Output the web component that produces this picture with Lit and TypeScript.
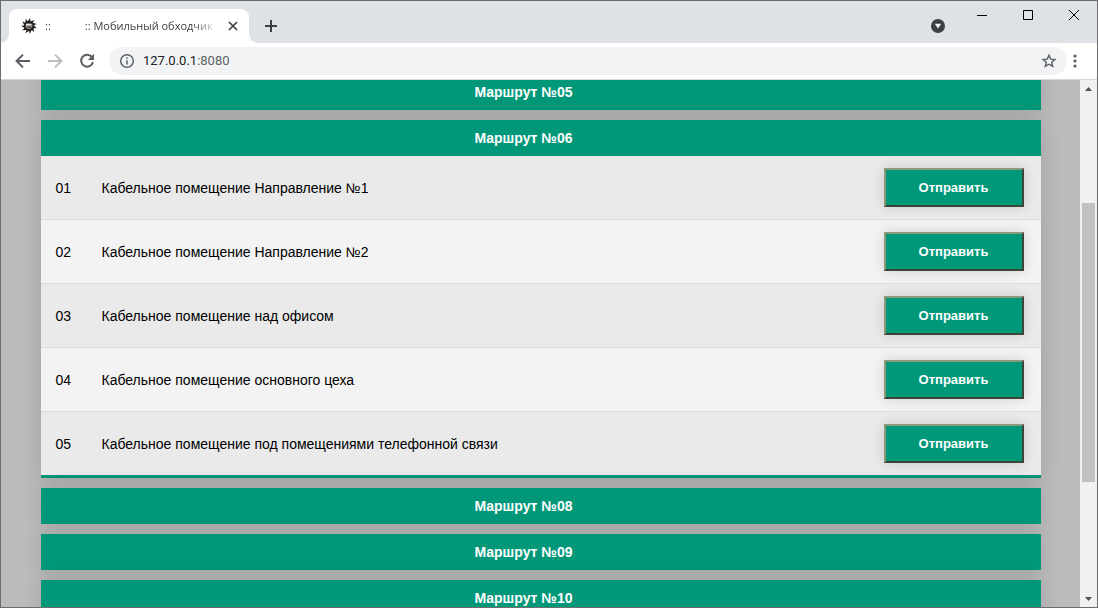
import { LitElement, html, svg, css } from "lit";
import { customElement, property } from "lit/decorators.js";

interface Point {
  code: string;
  name: string;
}

interface Route {
  title: string;
  points: Point[];
}

const ROUTES: Route[] = [
  { title: "Маршрут №05", points: [] },
  {
    title: "Маршрут №06",
    points: [
      { code: "01", name: "Кабельное помещение Направление №1" },
      { code: "02", name: "Кабельное помещение Направление №2" },
      { code: "03", name: "Кабельное помещение над офисом" },
      { code: "04", name: "Кабельное помещение основного цеха" },
      { code: "05", name: "Кабельное помещение под помещениями телефонной связи" },
    ],
  },
  { title: "Маршрут №08", points: [] },
  { title: "Маршрут №09", points: [] },
  { title: "Маршрут №10", points: [] },
];

const TEETH = Array.from({ length: 11 }, (_, i) => Math.round((i * 360) / 11));

@customElement("tab-strip")
export class TabStrip extends LitElement {
  static styles = css`
    :host {
      display: flex;
      height: 42px;
      background: #dee1e6;
      font-family: "Open Sans", sans-serif;
    }
    button {
      display: flex;
      align-items: center;
      justify-content: center;
      padding: 0;
      border: 0;
      background: none;
      color: #3c4043;
    }
    svg {
      display: block;
    }
    .flare {
      align-self: flex-end;
      width: 8px;
      height: 8px;
    }
    .flare.left {
      background: radial-gradient(circle at 0 0, transparent 7px, #fff 8px);
    }
    .flare.right {
      background: radial-gradient(circle at 100% 0, transparent 7px, #fff 8px);
    }
    .tab {
      display: flex;
      align-items: center;
      box-sizing: border-box;
      width: 240px;
      height: 34px;
      margin-top: 8px;
      padding: 0 8px 0 12px;
      border-radius: 8px 8px 0 0;
      background: #fff;
    }
    .title {
      display: flex;
      flex: 1;
      gap: 34px;
      margin: 0 6px 0 8px;
      white-space: nowrap;
      font-size: 11px;
      line-height: 16px;
      color: #3c4043;
      mask-image: linear-gradient(to right, #000 calc(100% - 28px), transparent);
    }
    .close {
      width: 16px;
      height: 16px;
    }
    .new {
      width: 28px;
      height: 28px;
      margin-top: 11px;
    }
    .spacer {
      flex: 1;
    }
    .search {
      width: 42px;
      height: 28px;
      margin-top: 11px;
    }
    .control {
      width: 46px;
      height: 28px;
      color: #000;
    }
  `;

  render() {
    return html`
      <span class="flare left"></span>
      <div class="tab">
        <svg width="16" height="16" viewBox="0 0 16 16" aria-hidden="true">
          ${TEETH.map((a) => svg`<path d="M6.4 3.6 9.4 0 9.2 3.6z" fill="#1c1b1a" transform="rotate(${a} 8 8)" />`)}
          <circle cx="8" cy="8" r="5.1" fill="#1c1b1a" />
          <path d="M4.6 6h6.8v2.8l-2 2.2H6.4L4.6 9z" fill="#8f8780" />
          <path d="M5 5.6h5.4v1.8H5z" fill="#e4e1de" />
          <path d="M6.4 8.6h3.6v1H6.4z" fill="#3a3532" />
        </svg>
        <span class="title"><span>::</span><span>:: Мобильный обходчик</span></span>
        <button class="close" aria-label="Закрыть вкладку">
          <svg width="16" height="16" viewBox="0 0 16 16" fill="none" stroke="currentColor" stroke-width="1.7">
            <path d="M4 4l8 8M12 4l-8 8" />
          </svg>
        </button>
      </div>
      <span class="flare right"></span>
      <button class="new" aria-label="Новая вкладка">
        <svg width="14" height="14" viewBox="0 0 14 14" fill="none" stroke="currentColor" stroke-width="2">
          <path d="M7 1v12M1 7h12" />
        </svg>
      </button>
      <span class="spacer"></span>
      <button class="search" aria-label="Поиск вкладок">
        <svg width="14" height="14" viewBox="0 0 14 14">
          <circle cx="7" cy="7" r="7" fill="#3c4043" />
          <path d="M3.8 4.8h6.4L7 9.4z" fill="#f1f3f4" />
        </svg>
      </button>
      <button class="control" aria-label="Свернуть">
        <svg width="10" height="10" viewBox="0 0 10 10"><path d="M0 5h10v1H0z" /></svg>
      </button>
      <button class="control" aria-label="Развернуть">
        <svg width="10" height="10" viewBox="0 0 10 10" fill="none" stroke="currentColor">
          <path d="M.5 .5h9v9h-9z" />
        </svg>
      </button>
      <button class="control" aria-label="Закрыть">
        <svg width="10" height="10" viewBox="0 0 10 10" fill="none" stroke="currentColor">
          <path d="M0 0l10 10M10 0L0 10" />
        </svg>
      </button>
    `;
  }
}

@customElement("address-bar")
export class AddressBar extends LitElement {
  static styles = css`
    :host {
      display: flex;
      align-items: center;
      box-sizing: border-box;
      height: 37px;
      padding: 0 14px 0 6px;
      border-bottom: 1px solid #d5d7da;
      background: #fff;
    }
    button {
      display: flex;
      align-items: center;
      justify-content: center;
      width: 32px;
      height: 28px;
      padding: 0;
      border: 0;
      background: none;
      color: #5a5d61;
    }
    button:disabled {
      color: #babcbe;
    }
    .field {
      display: flex;
      flex: 1;
      align-items: center;
      height: 28px;
      margin-left: 6px;
      padding: 0 2px 0 10px;
      border-radius: 14px;
      background: #f1f3f4;
      color: #5f6368;
      font: 13px/20px Roboto, sans-serif;
    }
    .url {
      flex: 1;
      padding-left: 8px;
    }
    .host {
      color: #202124;
    }
    .menu {
      width: 16px;
    }
  `;

  render() {
    return html`
      <button aria-label="Назад">
        <svg width="16" height="16" viewBox="0 0 16 16" fill="none" stroke="currentColor" stroke-width="2">
          <path d="M15 8H2.4M8 1.6L1.6 8 8 14.4" />
        </svg>
      </button>
      <button aria-label="Вперёд" disabled>
        <svg width="16" height="16" viewBox="0 0 16 16" fill="none" stroke="currentColor" stroke-width="2">
          <path d="M1 8h12.6M8 1.6L14.4 8 8 14.4" />
        </svg>
      </button>
      <button aria-label="Обновить">
        <svg width="16" height="16" viewBox="0 0 16 16" fill="none" stroke="currentColor" stroke-width="2">
          <path d="M13.2 4.4A6 6 0 1 0 14 9" />
          <path d="M15 .8V7H8.8z" fill="currentColor" stroke="none" />
        </svg>
      </button>
      <div class="field">
        <svg width="16" height="16" viewBox="0 0 16 16" fill="none" stroke="currentColor" stroke-width="1.5">
          <circle cx="8" cy="8" r="6.3" />
          <path d="M8 7.2v4.3M8 4.4v1.6" />
        </svg>
        <span class="url"><span class="host">127.0.0.1</span>:8080</span>
        <button aria-label="Добавить в закладки">
          <svg width="16" height="16" viewBox="0 0 16 16" fill="none" stroke="currentColor" stroke-width="1.4">
            <path d="M8 2.2l1.7 3.9 4.2.4-3.2 2.8 1 4.1L8 11.2l-3.7 2.2 1-4.1L2.1 6.5l4.2-.4z" />
          </svg>
        </button>
      </div>
      <button class="menu" aria-label="Меню">
        <svg width="4" height="14" viewBox="0 0 4 14" fill="currentColor">
          <circle cx="2" cy="2" r="1.6" />
          <circle cx="2" cy="7" r="1.6" />
          <circle cx="2" cy="12" r="1.6" />
        </svg>
      </button>
    `;
  }
}

@customElement("route-table")
export class RouteTable extends LitElement {
  @property({ attribute: false }) route!: Route;

  static styles = css`
    :host {
      display: block;
    }
    table {
      width: 100%;
      border-spacing: 0;
      box-shadow: 0 0 20px rgba(0, 0, 0, 0.15);
      font: 14px/16px "Liberation Sans", Arial, sans-serif;
      color: #000;
    }
    th {
      padding: 10px 49px 10px 15px;
      background: #009879;
      color: #fff;
      text-align: center;
    }
    td {
      padding: 12px 15px;
      border-bottom: 1px solid #ddd;
      background: #eaeaea;
    }
    tr:nth-child(even) td {
      background: #f3f3f3;
    }
    tr:last-child td {
      border-bottom: 3px solid #009879;
    }
    .code {
      width: 16px;
    }
    .action {
      width: 140px;
      padding-right: 17px;
    }
    button {
      display: block;
      box-sizing: border-box;
      width: 140px;
      height: 39px;
      padding: 0;
      border: 2px solid;
      border-color: #8a9a78 #3c4636 #3c4636 #8a9a78;
      background: #009879;
      box-shadow: 0 0 12px rgba(0, 0, 0, 0.15);
      color: #fff;
      font: bold 13px/16px "Liberation Sans", Arial, sans-serif;
    }
  `;

  render() {
    const { title, points } = this.route;
    return html`
      <table>
        <thead>
          <tr><th colspan="3">${title}</th></tr>
        </thead>
        ${points.length
          ? html`<tbody>
              ${points.map(
                (p) => html`<tr>
                  <td class="code">${p.code}</td>
                  <td>${p.name}</td>
                  <td class="action"><button>Отправить</button></td>
                </tr>`
              )}
            </tbody>`
          : null}
      </table>
    `;
  }
}

@customElement("app-root")
export class AppRoot extends LitElement {
  static styles = css`
    :host {
      display: flex;
      flex-direction: column;
      box-sizing: border-box;
      height: 100vh;
      border: 1px solid #6b6c6e;
      overflow: hidden;
    }
    .viewport {
      display: flex;
      flex: 1;
      min-height: 0;
    }
    .page {
      flex: 1;
      overflow: hidden;
      background: #bbb;
    }
    .routes {
      display: flex;
      flex-direction: column;
      gap: 10px;
      max-width: 1000px;
      margin: -6px auto 0;
    }
    .scrollbar {
      display: flex;
      flex-direction: column;
      width: 17px;
      background: #f1f1f1;
    }
    .arrow {
      display: flex;
      align-items: center;
      justify-content: center;
      height: 17px;
      color: #505050;
    }
    .before {
      flex: 106;
    }
    .thumb {
      flex: 279;
      margin: 0 2px;
      background: #c1c1c1;
    }
    .after {
      flex: 108;
    }
  `;

  render() {
    return html`
      <tab-strip></tab-strip>
      <address-bar></address-bar>
      <div class="viewport">
        <main class="page">
          <div class="routes">
            ${ROUTES.map((r) => html`<route-table .route=${r}></route-table>`)}
          </div>
        </main>
        <div class="scrollbar" aria-hidden="true">
          <span class="arrow">
            <svg width="7" height="4" viewBox="0 0 7 4" fill="currentColor"><path d="M0 4L3.5 0 7 4z" /></svg>
          </span>
          <span class="before"></span>
          <span class="thumb"></span>
          <span class="after"></span>
          <span class="arrow">
            <svg width="7" height="4" viewBox="0 0 7 4" fill="currentColor"><path d="M0 0L3.5 4 7 0z" /></svg>
          </span>
        </div>
      </div>
    `;
  }
}
